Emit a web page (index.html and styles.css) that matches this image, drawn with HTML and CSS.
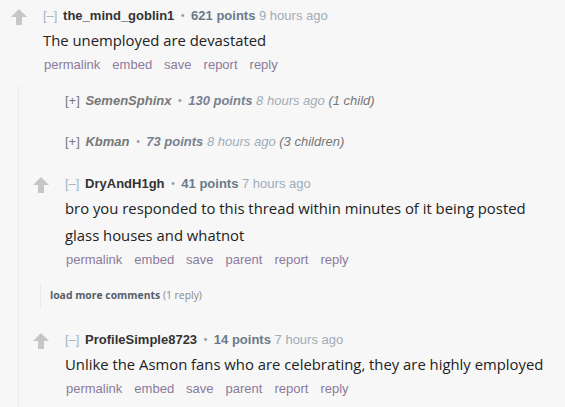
FILE: index.html
```html
<!DOCTYPE html>
<html lang="en">
  <head>
    <meta charset="utf-8">
    <title>Comments</title>
    <link rel="stylesheet" href="styles.css">
  </head>

  <body>
    <div class="comment top">
      <div class="vote">
        <svg class="arrow" viewBox="0 0 16 16"><path d="M8 0 L16 8 L11 8 L11 16 L5 16 L5 8 L0 8 Z"/></svg>
      </div>
      <div class="entry">
        <p class="tagline">
          <span class="expand">[&ndash;]</span>
          <span class="author">the_mind_goblin1</span>
          <span class="dot">&bull;</span>
          <span class="score">621 points</span>
          <span class="time">9 hours ago</span>
        </p>
        <div class="body">
          <p>The unemployed are devastated</p>
        </div>
        <ul class="buttons">
          <li>permalink</li>
          <li>embed</li>
          <li>save</li>
          <li>report</li>
          <li>reply</li>
        </ul>
      </div>
    </div>

    <div class="child">
      <div class="comment collapsed">
        <div class="vote"></div>
        <div class="entry">
          <p class="tagline">
            <span class="expand">[+]</span>
            <span class="author">SemenSphinx</span>
            <span class="dot">&bull;</span>
            <span class="score">130 points</span>
            <span class="time">8 hours ago</span>
            <span class="children">(1 child)</span>
          </p>
        </div>
      </div>

      <div class="comment collapsed">
        <div class="vote"></div>
        <div class="entry">
          <p class="tagline">
            <span class="expand">[+]</span>
            <span class="author">Kbman</span>
            <span class="dot">&bull;</span>
            <span class="score">73 points</span>
            <span class="time">8 hours ago</span>
            <span class="children">(3 children)</span>
          </p>
        </div>
      </div>

      <div class="comment">
        <div class="vote">
          <svg class="arrow" viewBox="0 0 16 16"><path d="M8 0 L16 8 L11 8 L11 16 L5 16 L5 8 L0 8 Z"/></svg>
        </div>
        <div class="entry">
          <p class="tagline">
            <span class="expand">[&ndash;]</span>
            <span class="author">DryAndH1gh</span>
            <span class="dot">&bull;</span>
            <span class="score">41 points</span>
            <span class="time">7 hours ago</span>
          </p>
          <div class="body">
            <p>bro you responded to this thread within minutes of it being posted</p>
            <p>glass houses and whatnot</p>
          </div>
          <ul class="buttons">
            <li>permalink</li>
            <li>embed</li>
            <li>save</li>
            <li>parent</li>
            <li>report</li>
            <li>reply</li>
          </ul>
        </div>
      </div>

      <div class="child inner">
        <div class="morechildren">
          <span class="more">load more comments</span>
          <span class="count">(1 reply)</span>
        </div>
      </div>

      <div class="comment">
        <div class="vote">
          <svg class="arrow" viewBox="0 0 16 16"><path d="M8 0 L16 8 L11 8 L11 16 L5 16 L5 8 L0 8 Z"/></svg>
        </div>
        <div class="entry">
          <p class="tagline">
            <span class="expand">[&ndash;]</span>
            <span class="author">ProfileSimple8723</span>
            <span class="dot">&bull;</span>
            <span class="score">14 points</span>
            <span class="time">7 hours ago</span>
          </p>
          <div class="body">
            <p>Unlike the Asmon fans who are celebrating, they are highly employed</p>
          </div>
          <ul class="buttons">
            <li>permalink</li>
            <li>embed</li>
            <li>save</li>
            <li>parent</li>
            <li>report</li>
            <li>reply</li>
          </ul>
        </div>
      </div>
    </div>
  </body>
</html>
```

FILE: styles.css
```css
body {
  margin: 0;
  background: #f7f7f7;
  font-family: "Liberation Sans", Arial, sans-serif;
  font-size: 13px;
  color: #222;
  overflow: hidden;
}

p {
  margin: 0;
}

.comment {
  display: flex;
  padding: 6px 0 10px 11px;
}

.comment.top {
  padding-top: 5px;
}

.comment.collapsed {
  padding-bottom: 15px;
}

.vote {
  width: 32px;
  flex: none;
}

.arrow {
  display: block;
  width: 16px;
  height: 16px;
  margin-top: 4px;
  fill: #c6c6c6;
}

.entry {
  flex: 1;
  min-width: 0;
}

.tagline {
  padding-top: 1px;
  line-height: 20px;
  white-space: nowrap;
  color: #888;
}

.collapsed .tagline {
  padding-top: 0;
  font-style: italic;
}

.expand {
  color: #a4b4c4;
  margin-right: 2px;
}

.author {
  font-weight: bold;
  color: #333;
}

.dot {
  color: #8a9aaa;
  font-size: 10px;
  margin: 0 3px;
  vertical-align: 1px;
}

.score {
  font-weight: bold;
  color: #6a7a8a;
}

.time {
  color: #a0acb8;
}

.collapsed .expand {
  font-style: normal;
}

.collapsed .expand,
.collapsed .author,
.collapsed .children {
  color: #777;
}

.collapsed .score {
  color: #7a8290;
}

.body {
  margin-top: 1px;
  font-family: "Open Sans", sans-serif;
  font-size: 14.85px;
  line-height: 27px;
  color: #222;
}

.buttons {
  display: flex;
  gap: 12px;
  margin: 1px 0 0;
  padding: 0 0 0 1px;
  list-style: none;
  line-height: 20px;
  color: #8c7a9c;
}

.child {
  margin-left: 18px;
  border-left: 1px solid #ebebeb;
}

.child .comment {
  padding-left: 14px;
}

.child.inner {
  margin: 3px 0 15px 21px;
  padding-left: 9px;
  line-height: 25px;
}

.morechildren {
  font-family: "Open Sans", sans-serif;
  font-size: 10.4px;
}

.more {
  font-weight: bold;
  color: #55606c;
}

.count {
  color: #888;
}
```
